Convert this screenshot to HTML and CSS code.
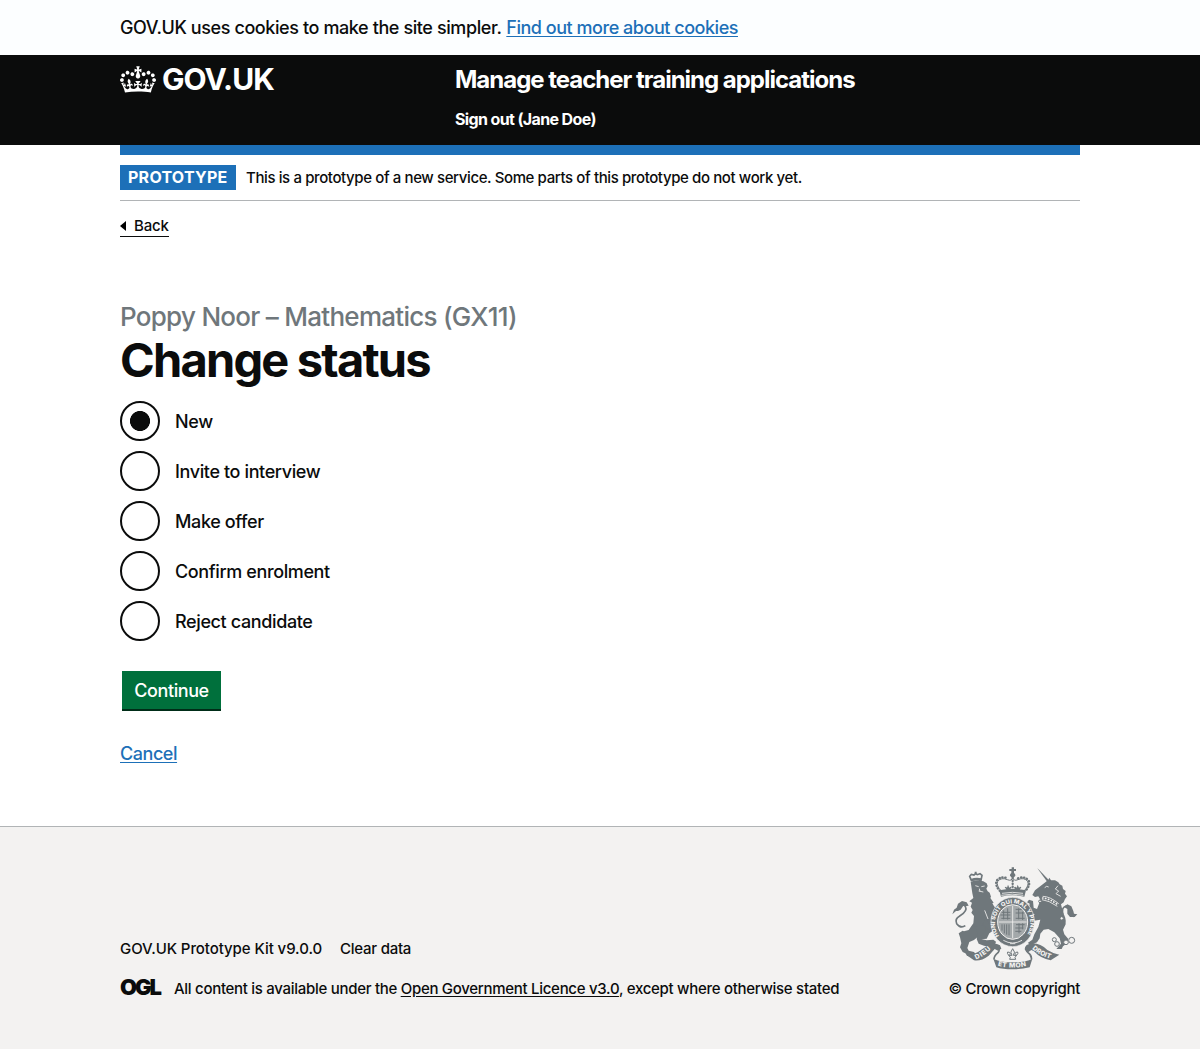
FILE: index.html
```html
<!DOCTYPE html>
<html lang="en">
<head>
<meta charset="utf-8">
<title>Change status - Manage teacher training applications</title>
<link rel="stylesheet" href="styles.css">
</head>
<body>
<div class="cookie-banner"><p class="container"><span class="cookie-text">GOV.UK uses cookies to make the site simpler.</span> <a class="link cookie-link" href="#">Find out more about cookies</a></p></div>
<header class="header">
  <div class="container header-grid">
    <a class="logo" href="#">
      <svg class="crown" viewBox="0 0 132 97" aria-hidden="true"><path fill="currentColor" d="M25 30.2c3.5 1.5 7.7-.2 9.1-3.7 1.5-3.6-.2-7.8-3.9-9.2-3.6-1.4-7.6.3-9.1 3.9-1.4 3.5.3 7.5 3.9 9zM9 39.5c3.6 1.5 7.8-.2 9.2-3.7 1.5-3.6-.2-7.8-3.9-9.1-3.6-1.5-7.6.2-9.1 3.8-1.4 3.5.3 7.5 3.8 9zM4.4 57.2c3.5 1.5 7.7-.2 9.1-3.8 1.5-3.6-.2-7.7-3.9-9.1-3.5-1.5-7.6.3-9.1 3.8-1.4 3.5.3 7.6 3.9 9.1zm38.3-21.4c3.5 1.5 7.7-.2 9.1-3.8 1.5-3.6-.2-7.7-3.9-9.1-3.6-1.5-7.6.3-9.1 3.8-1.3 3.6.4 7.7 3.9 9.1zm64.4-5.6c-3.6 1.5-7.8-.2-9.1-3.7-1.5-3.6.2-7.8 3.8-9.2 3.6-1.4 7.7.3 9.2 3.9 1.3 3.5-.4 7.5-3.9 9zm15.9 9.3c-3.6 1.5-7.7-.2-9.1-3.7-1.5-3.6.2-7.8 3.7-9.1 3.6-1.5 7.7.2 9.2 3.8 1.5 3.5-.3 7.5-3.8 9zm4.7 17.7c-3.6 1.5-7.8-.2-9.2-3.8-1.5-3.6.2-7.7 3.9-9.1 3.6-1.5 7.7.3 9.2 3.8 1.3 3.5-.4 7.6-3.9 9.1zM89.3 35.8c-3.6 1.5-7.8-.2-9.2-3.8-1.4-3.6.2-7.7 3.9-9.1 3.6-1.5 7.7.3 9.2 3.8 1.4 3.6-.3 7.7-3.9 9.1zM69.7 17.7l8.9 4.7V9.3l-8.9 2.8c-.2-.3-.5-.6-.9-.9L72.4 0H59.6l3.5 11.2c-.3.3-.6.5-.9.9l-8.8-2.8v13.1l8.8-4.7c.3.3.6.7.9.9l-5 15.4v.1c-.2.8-.4 1.6-.4 2.4 0 4.1 3.1 7.5 7 8.1h.2c.3 0 .7.1 1 .1.4 0 .7 0 1-.1h.2c4-.6 7.1-4.1 7.1-8.1 0-.8-.1-1.7-.4-2.4V34l-5.1-15.4c.4-.2.7-.6 1-.9zM66 92.8c16.9 0 32.8 1.1 47.1 3.2 4-16.9 8.9-26.7 14-33.5l-9.6-3.4c1 4.9 1.1 7.2 0 10.2-1.5-1.4-3-4.3-4.2-8.7L108.6 76c2.8-2 5-3.2 7.5-3.3-4.4 9.4-10 11.9-13.6 11.2-4.3-.8-6.3-4.6-5.6-7.9 1-4.7 5.7-5.9 8-.5 4.3-8.7-3-11.4-7.6-8.8 7.1-7.2 7.9-13.5 2.1-21.1-8 6.1-8.1 12.3-4.5 20.8-4.7-5.4-12.1-2.5-9.5 6.2 3.4-5.2 7.9-2 7.2 3.1-.6 4.3-6.4 7.8-13.5 7.2-10.3-.9-10.9-8-11.2-13.8 2.5-.5 7.1 1.8 11 7.3L80.2 60c-4.1 4.4-8 5.3-12.3 5.4 1.4-4.4 8-11.6 8-11.6H55.5s6.4 7.2 7.9 11.6c-4.2-.1-8-1-12.3-5.4l1.4 16.4c3.9-5.5 8.5-7.7 10.9-7.3-.3 5.8-.9 12.8-11.1 13.8-7.2.6-12.9-2.9-13.5-7.2-.7-5 3.8-8.3 7.1-3.1 2.7-8.7-4.6-11.6-9.4-6.2 3.7-8.5 3.6-14.7-4.6-20.8-5.8 7.6-5 13.9 2.2 21.1-4.7-2.6-11.9.1-7.7 8.8 2.3-5.5 7.1-4.2 8.1.5.7 3.3-1.3 7.1-5.7 7.9-3.5.7-9-1.8-13.5-11.2 2.5.1 4.7 1.3 7.5 3.3l-4.7-15.4c-1.2 4.4-2.7 7.2-4.3 8.7-1.1-3-.9-5.3 0-10.2l-9.5 3.4c5 6.9 9.9 16.7 14 33.5 14.8-2.1 30.8-3.2 47.7-3.2z"/></svg>
      <span class="logo-text">GOV.UK</span>
    </a>
    <div class="header-content">
      <a class="service-name" href="#">Manage teacher training applications</a>
      <a class="sign-out" href="#">Sign out (Jane Doe)</a>
    </div>
  </div>
</header>
<div class="container page">
  <div class="phase-banner"><strong class="tag">PROTOTYPE</strong><span class="phase-text">This is a prototype of a new service. Some parts of this prototype do not work yet.</span></div>
  <a class="back" href="#"><svg class="back-arrow" viewBox="0 0 6 10" aria-hidden="true"><path d="M6 0v10L0 5z"/></svg><span>Back</span></a>
  <main>
    <h1><span class="caption">Poppy Noor – Mathematics (GX11)</span><span class="title">Change status</span></h1>
    <form>
      <div class="radios">
        <label class="radio"><input type="radio" name="status" checked><span>New</span></label>
        <label class="radio"><input type="radio" name="status"><span>Invite to interview</span></label>
        <label class="radio"><input type="radio" name="status"><span>Make offer</span></label>
        <label class="radio"><input type="radio" name="status"><span>Confirm enrolment</span></label>
        <label class="radio"><input type="radio" name="status"><span>Reject candidate</span></label>
      </div>
      <button class="button" type="button">Continue</button>
      <p class="cancel"><a class="link" href="#">Cancel</a></p>
    </form>
  </main>
</div>
<footer class="footer">
  <div class="container footer-row">
    <div class="footer-meta">
      <div class="footer-links"><span class="kit">GOV.UK Prototype Kit v9.0.0</span><a class="clear" href="#">Clear data</a></div>
      <div class="licence"><span class="ogl">OGL</span><span class="licence-text">All content is available under the <a href="#">Open Government Licence v3.0</a>, except where otherwise stated</span></div>
    </div>
    <a class="copyright" href="#">
      <svg class="crest" viewBox="30 33 390 315" aria-hidden="true">
        <defs>
          <path id="scroll-left" d="M108 313Q136 302 156 279"/>
          <path id="scroll-mid" d="M173 332Q218 344 264 332"/>
          <path id="scroll-right" d="M276 281Q300 304 338 313"/>
          <path id="garter-text" d="M177 243A53 60 0 1 1 259 243"/>
        </defs>
        <!-- lion -->
        <path class="ink" d="M92 80q18-7 38-1l10 6 3 8-4 8 4 8 6 4 4 12-2 4 10 14-4 2 6 10 8 2q14 4 11 18l-9 10-10-14-7 28 8 12-2 14-14 10-8 16-16 2-12-6-10 8-14 6-6 18 4 8 16 4 6 8-8 6-18-2-6-8-8-4-8-14 4-12-4-18-4-12 12-8 4 2 14-4 14-20 2-22-8-10 4-8-6-10 4-12-8-4 12-10-3-14z"/>
        <path class="ink" d="M104 214l26-2 8 14-16 16 2 10 16 4 20-2 8 6-4 12-14 4-18-4-16-6-6-14 4-16zM136 190l16 22 16-2 6 10-12 8-20-6-14-14z"/>
        <path class="line" d="M76 212Q62 222 50 206Q44 192 58 184Q84 168 76 154Q68 144 58 156"/>
        <path class="ink" d="M37 178l5-14 8-6 4-12 12-8 14 4 6 10-12 2-4-2-8 12-8 4-6 0z"/>
        <path class="paper-line" d="M106 92l10 3M124 95l10-2M116 108l14 3M118 101l2 8M134 166l10 26"/>
        <path class="line" d="M94 76l-5-12 5-6 8 2 5-4 5 3 8-3 6 5-3 15q-16-4-29 0z"/>
        <path class="ink" d="M92 72q16-6 32-2v6q-16-3-30 3zM104 50h6v8h-6z"/>
        <!-- unicorn -->
        <path class="ink" d="M292 40l5 4 30 32-5 5z"/>
        <path class="ink" d="M318 80l7-6 3-6 5 8 12 0 10 6 4 6 8 4 2 10 8 6-2 8 6 8-6 8-4 10-8 6 4 16 2 16 6 10 2 18-8 16 4 14 12 14-6 14-10 8-4 8-16 0 14-16-4-16-16-18-18-10-14 2-10 12-2 14-8 12-18 8-10-6 14-10 6-16 12-22 6-22-24 4-10-4-10-14-6-20-8-6-2-8 10 0 12 16 8 18 14 0-14-10-4-10 2-14-8-4 6-8 12 4 2 20 10 4 6-16 4-12-6-10-10 2-8-6 8-14z"/>
        <path class="line" d="M368 214Q380 200 370 180Q362 158 378 153Q390 154 388 168Q386 182 402 184"/>
        <path class="ink" d="M372 156l10-8 12 6 6 14 2 8 10 2-8 8-14 0-8-10 0-14z"/>
        <path class="paper-line" d="M314 98l6-4 6 2M308 124q22 0 48 22M306 134q20 2 46 20"/>
        <path class="beads paper" d="M308 129q22 2 46 21"/>
        <path class="paper-line" d="M354 92l-8 10 10 6-8 8 14 8"/>
        <circle class="bezant" cx="343" cy="254" r="6"/><circle class="bezant" cx="351" cy="267" r="7"/><circle class="bezant" cx="378" cy="262" r="7"/><circle class="bezant" cx="395" cy="256" r="9"/><circle class="bezant" cx="300" cy="139" r="4"/><circle class="bezant" cx="365" cy="190" r="5"/>
        <!-- royal crown -->
        <path class="line thin" d="M184 108Q168 92 173 79Q184 66 202 74Q216 80 218 66Q220 80 234 74Q252 66 263 79Q268 92 252 108"/>
        <path class="beads" d="M180 108Q164 91 170 77Q182 62 202 70M234 70Q254 62 266 77Q272 91 256 108M218 68v34"/>
        <path class="ink" d="M215 37h7v5h6v6h-6v6q5 3 4 8l-4 5h-8l-4-5q-1-5 4-8v-6h-6v-6h7zM178 106q39-9 80 0l-5 19q-35-8-70 0zM200 104l-6-7 4-2 3 3 3-9 4 9 4-3 3 2-6 7zM226 104l-4-7 4-2 4 3 3-9 4 9 4-3 3 2-5 7z"/>
        <path class="paper-line" d="M186 115q31-6 63 0M184 121q32-7 66 0"/>
        <!-- garter and shield -->
        <ellipse class="ink garter" cx="218" cy="201" rx="65" ry="74"/>
        <ellipse class="shield" cx="218" cy="201" rx="45" ry="52"/>
        <path class="paper-line" d="M218 152v98M176 201h84"/>
        <path class="line thin" d="M185 172h26M181 180h30M184 190h27M191 166v27M203 160v34M227 163h18M227 174h25M227 190h27M236 160v33M248 170v25M228 209h26M226 219h24M226 229h18M237 205v30M248 205v18M186 208v19M193 208v27M200 208v31M207 208v33"/>
        <text class="motto small"><textPath href="#garter-text" textLength="252" lengthAdjust="spacingAndGlyphs">HONI SOIT QUI MAL Y PENSE</textPath></text>
        <path class="paper-line" d="M190 256q28 16 56 0M210 266h16"/>
        <!-- ribbons -->
        <path class="ink" d="M78 299q20 2 36-8l32-22q18-8 34 2l4 10-10 6-10-5-18 20q-24 18-44 14zM358 299q-20-4-36-14-20-20-44-20-24 2-24 18l8 10 12-8 8 4q20 22 50 27z"/>
        <path class="line" d="M172 275q10 7 2 18-12 10-12 20M262 275q-8 9 2 18 12 8 10 20"/>
        <path class="ink" d="M160 311q20 11 58 11t59-11l-8 26q-21 6-51 6t-49-6z"/>
        <path class="line thin" d="M218 281q10 11 2 20h10l-5 6 2 6h-18l2-6-5-6h10q-8-9 2-20zM211 300q-11 1-8-9 7-1 9 7M225 300q11 1 8-9-7-1-9 7"/>
        <text class="motto"><textPath href="#scroll-left" textLength="55">DIEU</textPath></text>
        <text class="motto"><textPath href="#scroll-mid" textLength="87">ET MON</textPath></text>
        <text class="motto"><textPath href="#scroll-right" textLength="63">DROIT</textPath></text>
      </svg>
      <span class="copyright-text">© Crown copyright</span>
    </a>
  </div>
</footer>
</body>
</html>
```
FILE: styles.css
```css
* { box-sizing: border-box; }
body { margin: 0; background: #fff; color: #0b0c0c; font-family: Inter, "Liberation Sans", sans-serif; font-size: 18px; line-height: 25px; font-weight: 450; }
p, h1 { margin: 0; }
a { color: inherit; }
.container { width: 960px; margin: 0 auto; white-space: nowrap; }
.link { color: #1d70b8; text-underline-offset: 2px; text-decoration-thickness: 1px; }
.cookie-banner { height: 55px; padding-top: 15px; background: #fcfeff; }
.cookie-text { letter-spacing: -0.4px; }
.cookie-link { letter-spacing: -0.47px; }
.header { height: 90px; background: #0b0c0c; color: #fff; }
.header a { color: #fff; text-decoration: none; }
.header-grid { display: grid; grid-template-columns: 335px 1fr; padding-top: 10px; }
.logo { display: flex; align-items: flex-start; gap: 6px; height: 30px; }
.crown { width: 36px; height: 27px; margin-top: 1px; }
.logo-text { font-size: 30px; line-height: 29px; font-weight: 750; letter-spacing: -0.95px; }
.header-content { display: flex; flex-direction: column; align-items: flex-start; }
.service-name { font-size: 24px; line-height: 30px; font-weight: 750; letter-spacing: -1.01px; }
.sign-out { margin-top: 14px; font-size: 16px; line-height: 20px; font-weight: 700; letter-spacing: -0.63px; }
.page { height: 681px; border-top: 10px solid #1d70b8; }
.phase-banner { display: flex; align-items: center; gap: 10px; height: 46px; border-bottom: 1px solid #b1b4b6; font-size: 16px; }
.tag { width: 116px; height: 25px; padding-left: 8px; background: #1d70b8; color: #fff; font-size: 16px; font-weight: 700; letter-spacing: 0.25px; }
.phase-text { font-size: 15px; letter-spacing: -0.39px; }
.back { display: inline-flex; align-items: center; gap: 8px; width: 49px; height: 21px; margin-top: 15px; border-bottom: 1px solid; font-size: 15px; letter-spacing: -0.2px; line-height: 20px; text-decoration: none; }
.back-arrow { width: 6px; height: 10px; }
main { margin-top: 65px; }
h1 { display: flex; flex-direction: column; }
.caption { font-size: 26px; line-height: 30px; font-weight: 450; color: #6f777b; letter-spacing: -0.73px; }
.title { font-size: 47px; line-height: 50px; font-weight: 750; letter-spacing: -1.8px; margin-top: 3px; }
.radios { display: grid; gap: 10px; margin-top: 16px; }
.radio { display: flex; align-items: center; gap: 15px; height: 40px; letter-spacing: -0.38px; }
.radio input { appearance: none; width: 40px; height: 40px; margin: 0; border: 2px solid #0b0c0c; border-radius: 50%; }
.radio input:checked { background: radial-gradient(circle, #0b0c0c 9.7px, transparent 10.3px); }
.button { display: block; width: 99px; height: 38px; margin: 30px 0 0 2px; padding: 0; border: 0; background: #00703c; box-shadow: 0 2px #002d18; color: #fff; font: inherit; font-weight: 500; letter-spacing: -0.4px; }
.cancel { margin-top: 32px; letter-spacing: -0.45px; }
.footer { height: 223px; border-top: 1px solid #b1b4b6; background: #f3f2f1; font-size: 15px; line-height: 20px; }
.footer-row { display: flex; justify-content: space-between; align-items: flex-end; height: 172px; }
.footer-links { display: flex; gap: 18px; }
.kit { letter-spacing: -0.07px; }
.clear { text-decoration: none; letter-spacing: -0.25px; }
.licence { display: flex; gap: 13px; margin-top: 20px; }
.ogl { width: 41px; font-size: 22px; line-height: 17px; font-weight: 900; letter-spacing: -2.1px; }
.licence-text { letter-spacing: -0.29px; }
.licence a { text-underline-offset: 2px; }
.copyright { display: flex; flex-direction: column; align-items: flex-end; text-decoration: none; }
.crest { width: 130px; height: 105px; margin-bottom: 8px; }
.copyright-text { letter-spacing: -0.32px; }
.ink { fill: #6f777b; }
.garter { stroke: #f3f2f1; stroke-width: 2; }
.line { fill: none; stroke: #6f777b; stroke-width: 5; }
.thin { stroke-width: 3; }
.beads { fill: none; stroke: #6f777b; stroke-width: 7; stroke-linecap: round; stroke-dasharray: 1 8; }
.paper { stroke: #f3f2f1; stroke-width: 5; }
.bezant { fill: #f3f2f1; stroke: #6f777b; stroke-width: 3; }
.paper-line { fill: none; stroke: #f3f2f1; stroke-width: 2.5; }
.shield { fill: #a3a8aa; stroke: #f3f2f1; stroke-width: 3; }
.motto { fill: #f3f2f1; font-size: 20px; font-weight: 800; }
.small { font-size: 17px; }
```
